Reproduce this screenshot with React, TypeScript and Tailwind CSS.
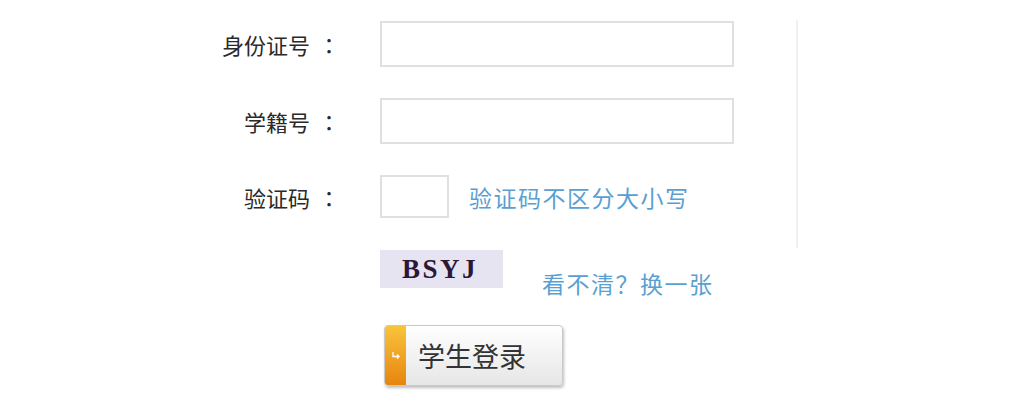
const font = { fontFamily: '"Noto Sans CJK SC", "Noto Sans", sans-serif' };

// label with the full-width colon centred in its own cell, like the reference
const Label = ({ text }: { text: string }) => (
  <div className="w-[140px] mr-[40px] flex justify-end items-center text-[22px] leading-[30px] text-[#2a2a2a]">
    <span>{text}</span>
    <span className="ml-[8px] w-[22px] text-center" style={{ fontFamily: '"Noto Sans CJK TC", sans-serif' }}>：</span>
  </div>
);

const App = () => {
  return (
    <div className="w-[1024px] h-[405px] bg-white flex overflow-hidden" style={font}>
      {/* form column */}
      <div className="w-[796px] pl-[200px] pt-[21px] flex flex-col">
        <div className="flex items-center">
          <Label text="身份证号" />
          <input className="w-[354px] h-[46px] border-2 border-[#e0e0e0] bg-white outline-none" />
        </div>

        <div className="flex items-center mt-[31px]">
          <Label text="学籍号" />
          <input className="w-[354px] h-[46px] border-2 border-[#e0e0e0] bg-white outline-none" />
        </div>

        <div className="flex items-center mt-[31px]">
          <Label text="验证码" />
          <input className="w-[69px] h-[43px] border-2 border-[#e0e0e0] bg-white outline-none" />
          <span className="ml-[20px] text-[23px] leading-[30px] tracking-[1.5px] text-[#5a9fd2]">验证码不区分大小写</span>
        </div>

        {/* captcha image */}
        <div className="flex items-start mt-[32px] pl-[180px]">
          <div className="w-[123px] h-[38px] bg-[#e6e4f0] flex items-center pl-[22px]">
            <span
              className="text-[27px] leading-none font-bold tracking-[2.5px] text-[#2b1838]"
              style={{ fontFamily: '"Liberation Serif", serif' }}
            >
              BSYJ
            </span>
          </div>
          <a className="ml-[39px] mt-[18px] text-[23px] leading-[30px] tracking-[1.5px] text-[#5a9fd2] cursor-pointer">看不清？换一张</a>
        </div>

        {/* login button */}
        <div className="mt-[27px] pl-[184px]">
          <button className="flex w-[179px] h-[61px] rounded-[4px] border border-[#c9c9c9] bg-gradient-to-b from-white to-[#e6e6e6] shadow-[1px_2px_3px_rgba(0,0,0,0.25)] overflow-hidden cursor-pointer">
            <span className="w-[21px] h-full bg-gradient-to-b from-[#f8c43a] to-[#e6850b] flex items-center justify-center">
              <svg width="9" height="9" viewBox="0 0 9 9" fill="none" stroke="white" strokeWidth="1.4">
                <path d="M2 1 V5.5 H8 M6 3.5 L8 5.5 L6 7.5" />
              </svg>
            </span>
            <span className="ml-[12px] self-center text-[27px] leading-none text-[#333]">学生登录</span>
          </button>
        </div>
      </div>

      {/* faint divider */}
      <div className="mt-[20px] h-[228px] w-[2px] bg-[#f5eeee]" />
    </div>
  );
};

export default App;
